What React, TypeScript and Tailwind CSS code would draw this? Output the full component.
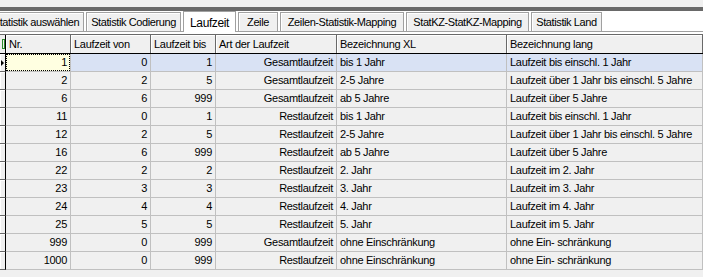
import React from 'react'

const rows = [
  { nr: 1, von: 0, bis: 1, art: 'Gesamtlaufzeit', xl: 'bis 1 Jahr', lang: 'Laufzeit bis einschl. 1 Jahr' },
  { nr: 2, von: 2, bis: 5, art: 'Gesamtlaufzeit', xl: '2-5 Jahre', lang: 'Laufzeit über 1 Jahr bis einschl. 5 Jahre' },
  { nr: 6, von: 6, bis: 999, art: 'Gesamtlaufzeit', xl: 'ab 5 Jahre', lang: 'Laufzeit über 5 Jahre' },
  { nr: 11, von: 0, bis: 1, art: 'Restlaufzeit', xl: 'bis 1 Jahr', lang: 'Laufzeit bis einschl. 1 Jahr' },
  { nr: 12, von: 2, bis: 5, art: 'Restlaufzeit', xl: '2-5 Jahre', lang: 'Laufzeit über 1 Jahr bis einschl. 5 Jahre' },
  { nr: 16, von: 6, bis: 999, art: 'Restlaufzeit', xl: 'ab 5 Jahre', lang: 'Laufzeit über 5 Jahre' },
  { nr: 22, von: 2, bis: 2, art: 'Restlaufzeit', xl: '2. Jahr', lang: 'Laufzeit im 2. Jahr' },
  { nr: 23, von: 3, bis: 3, art: 'Restlaufzeit', xl: '3. Jahr', lang: 'Laufzeit im 3. Jahr' },
  { nr: 24, von: 4, bis: 4, art: 'Restlaufzeit', xl: '4. Jahr', lang: 'Laufzeit im 4. Jahr' },
  { nr: 25, von: 5, bis: 5, art: 'Restlaufzeit', xl: '5. Jahr', lang: 'Laufzeit im 5. Jahr' },
  { nr: 999, von: 0, bis: 999, art: 'Gesamtlaufzeit', xl: 'ohne Einschränkung', lang: 'ohne Ein- schränkung' },
  { nr: 1000, von: 0, bis: 999, art: 'Restlaufzeit', xl: 'ohne Einschränkung', lang: 'ohne Ein- schränkung' },
]

const tabs = [
  { label: 'Statistik auswählen', w: 'w-[96px] ml-[-12px]' },
  { label: 'Statistik Codierung', w: 'w-[95px]' },
  { label: 'Laufzeit', w: 'w-[53px]', active: true },
  { label: 'Zeile', w: 'w-[40px]' },
  { label: 'Zeilen-Statistik-Mapping', w: 'w-[124px]' },
  { label: 'StatKZ-StatKZ-Mapping', w: 'w-[123px]' },
  { label: 'Statistik Land', w: 'w-[71px]' },
]

const cols = 'grid grid-cols-[6px_65px_80px_65px_121px_170px_1fr]'

export default function App() {
  return (
    <div className="w-[703px] h-[277px] overflow-hidden bg-[#f0f0f0] text-black text-[11px] tracking-[-0.3px] font-['Liberation_Sans',Arial,sans-serif]">
      <div className="h-[7px] bg-[#f0f0f0]"></div>
      <div className="h-[4px] bg-[#696969]"></div>

      {/* Tab strip */}
      <div className="h-[21px] bg-white border-b border-[#a0a0a0] flex items-end gap-[2px] whitespace-nowrap">
        {tabs.map((t) =>
          t.active ? (
            <div
              key={t.label}
              className={`${t.w} h-[21px] -mb-px relative z-10 bg-white border border-b-0 border-[#a0a0a0] flex items-start justify-center pt-[2px] text-[12px] tracking-[-0.4px] shrink-0`}
            >
              {t.label}
            </div>
          ) : (
            <div
              key={t.label}
              className={`${t.w} h-[19px] bg-[#f0f0f0] border border-b-0 border-[#a0a0a0] shadow-[inset_1px_1px_0_#fff] flex items-center justify-center text-[11px] tracking-[-0.4px] shrink-0`}
            >
              {t.label}
            </div>
          )
        )}
      </div>
      <div className="h-[2px] bg-white"></div>

      {/* Grid */}
      <div className="border-t border-[#696969]">
        <div className={`${cols} h-[19px] border-b border-[#000]`}>
          <div className="bg-[#f0f0f0] border-r border-[#000] flex items-center justify-end">
            <div className="w-[3px] h-[10px] border border-[#2e8b2e]"></div>
          </div>
          {['Nr.', 'Laufzeit von', 'Laufzeit bis', 'Art der Laufzeit', 'Bezeichnung XL', 'Bezeichnung lang'].map((h) => (
            <div
              key={h}
              className="bg-[#f0f0f0] border-r border-[#696969] shadow-[inset_1px_1px_0_#fff] pl-[3px] flex items-center whitespace-nowrap overflow-hidden"
            >
              {h}
            </div>
          ))}
        </div>

        {rows.map((r, i) => {
          const sel = i === 0
          const cell = `h-[18px] border-r border-b border-[#c0c0c0] flex items-center whitespace-nowrap overflow-hidden ${
            sel ? 'bg-[#d9e2f4]' : 'bg-[#f0f0f0]'
          }`
          return (
            <div key={r.nr} className={cols}>
              <div className="h-[18px] bg-[#f0f0f0] border-r border-[#000] border-b border-b-[#696969] shadow-[inset_1px_1px_0_#fff] flex items-center pl-[1px]">
                {sel && (
                  <div className="w-0 h-0 border-y-[3px] border-y-transparent border-l-[3px] border-l-black"></div>
                )}
              </div>
              {sel ? (
                <div className="h-[18px] border-r border-b border-[#c0c0c0] bg-[#ffffe1] flex items-stretch">
                  <div className="flex-1 border border-dotted border-black flex items-center justify-end pr-[2px]">
                    {r.nr}
                  </div>
                </div>
              ) : (
                <div className={`${cell} justify-end pr-[3px]`}>{r.nr}</div>
              )}
              <div className={`${cell} justify-end pr-[3px]`}>{r.von}</div>
              <div className={`${cell} justify-end pr-[3px]`}>{r.bis}</div>
              <div className={`${cell} justify-end pr-[3px]`}>{r.art}</div>
              <div className={`${cell} pl-[3px]`}>{r.xl}</div>
              <div className={`${cell} pl-[3px]`}>{r.lang}</div>
            </div>
          )
        })}
      </div>
    </div>
  )
}
